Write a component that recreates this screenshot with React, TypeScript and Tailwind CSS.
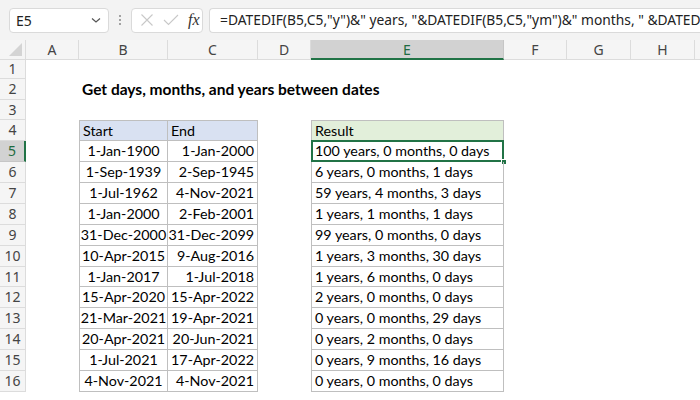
import React from 'react'

interface Row {
  start: string
  end: string
  result: string
}

const rows: Row[] = [
  { start: '1-Jan-1900', end: '1-Jan-2000', result: '100 years, 0 months, 0 days' },
  { start: '1-Sep-1939', end: '2-Sep-1945', result: '6 years, 0 months, 1 days' },
  { start: '1-Jul-1962', end: '4-Nov-2021', result: '59 years, 4 months, 3 days' },
  { start: '1-Jan-2000', end: '2-Feb-2001', result: '1 years, 1 months, 1 days' },
  { start: '31-Dec-2000', end: '31-Dec-2099', result: '99 years, 0 months, 0 days' },
  { start: '10-Apr-2015', end: '9-Aug-2016', result: '1 years, 3 months, 30 days' },
  { start: '1-Jan-2017', end: '1-Jul-2018', result: '1 years, 6 months, 0 days' },
  { start: '15-Apr-2020', end: '15-Apr-2022', result: '2 years, 0 months, 0 days' },
  { start: '21-Mar-2021', end: '19-Apr-2021', result: '0 years, 0 months, 29 days' },
  { start: '20-Apr-2021', end: '20-Jun-2021', result: '0 years, 2 months, 0 days' },
  { start: '1-Jul-2021', end: '17-Apr-2022', result: '0 years, 9 months, 16 days' },
  { start: '4-Nov-2021', end: '4-Nov-2021', result: '0 years, 0 months, 0 days' },
]

const cols = [
  { name: 'A', w: 'w-[53px]' },
  { name: 'B', w: 'w-[89px]' },
  { name: 'C', w: 'w-[90px]' },
  { name: 'D', w: 'w-[53px]' },
  { name: 'E', w: 'w-[193px]' },
  { name: 'F', w: 'w-[63px]' },
  { name: 'G', w: 'w-[64px]' },
  { name: 'H', w: 'w-[64px]' },
]

// row heights, rows 1..16
const rowH = ['h-[19px]', 'h-[21px]', 'h-[20px]', 'h-[21px]', 'h-[21px]', 'h-[21px]', 'h-[21px]', 'h-[21px]',
  'h-[21px]', 'h-[21px]', 'h-[20px]', 'h-[21px]', 'h-[21px]', 'h-[21px]', 'h-[21px]', 'h-[21px]']

function RowHead({ n, active }: { n: number; active?: boolean }) {
  return (
    <div
      className={`w-[26px] h-full shrink-0 flex items-center justify-center text-[14px] border-b border-r ${
        active
          ? 'bg-[#d2d2d2] text-[#1e6b41] border-b-[#c6c6c6] border-r-[#217346] border-r-2'
          : 'bg-[#f5f5f5] text-[#444] border-[#dcdcdc]'
      }`}
      style={{ fontFamily: '"Noto Sans", sans-serif' }}
    >
      {n}
    </div>
  )
}

export default function App() {
  return (
    <div className="w-[700px] h-[400px] overflow-hidden bg-white" style={{ fontFamily: '"Noto Sans", "Open Sans", sans-serif' }}>
      {/* Formula bar */}
      <div className="h-[40px] bg-[#f3f3f3] flex items-center">
        <div className="ml-[9px] w-[100px] h-[25px] bg-white rounded-[4px] border border-[#dadada] flex items-center justify-between pl-[6px] pr-[6px]">
          <span className="text-[14px] text-[#222]">E5</span>
          <svg width="12" height="12" viewBox="0 0 12 12">
            <path d="M2 4.5 L6 8 L10 4.5" fill="none" stroke="#555" strokeWidth="1.2" />
          </svg>
        </div>
        <div className="w-[22px] flex flex-col items-center gap-[2px]">
          <span className="w-[2px] h-[2px] bg-[#888] rounded-full" />
          <span className="w-[2px] h-[2px] bg-[#888] rounded-full" />
          <span className="w-[2px] h-[2px] bg-[#888] rounded-full" />
        </div>
        <div className="w-[72px] h-[25px] bg-white rounded-[4px] border border-[#dadada] flex items-center pl-[8px] gap-[9px]">
          <svg width="14" height="14" viewBox="0 0 14 14">
            <path d="M1.5 1.5 L12.5 12.5 M12.5 1.5 L1.5 12.5" stroke="#c8c8c8" strokeWidth="1.1" />
          </svg>
          <svg width="16" height="14" viewBox="0 0 16 14">
            <path d="M1 7 L5.5 11.5 L15 2" fill="none" stroke="#c8c8c8" strokeWidth="1.1" />
          </svg>
          <span className="text-[16px] italic text-[#333] leading-none" style={{ fontFamily: '"Liberation Serif", serif' }}>
            fx
          </span>
        </div>
        <div className="ml-[6px] flex-1 min-w-0 h-[25px] bg-white rounded-l-[4px] border border-r-0 border-[#dadada] flex items-center pl-[10px] overflow-hidden whitespace-nowrap">
          <span className="text-[13.8px] text-[#222]">
            =DATEDIF(B5,C5,"y")&amp;" years, "&amp;DATEDIF(B5,C5,"ym")&amp;" months, " &amp;DATEDIF(
          </span>
        </div>
      </div>

      {/* Column headers */}
      <div className="flex h-[20px] bg-[#f5f5f5]">
        <div className="w-[26px] shrink-0 border-r border-b border-[#dcdcdc] relative">
          <svg className="absolute right-[3px] bottom-[3px]" width="13" height="13" viewBox="0 0 13 13">
            <path d="M13 0 L13 13 L0 13 Z" fill="#d4d4d4" />
          </svg>
        </div>
        {cols.map((c) => (
          <div
            key={c.name}
            className={`${c.w} shrink-0 flex items-center justify-center text-[14px] border-r ${
              c.name === 'E'
                ? 'bg-[#d2d2d2] text-[#1e6b41] border-[#c6c6c6] border-b-2 border-b-[#217346]'
                : 'text-[#444] border-[#dcdcdc] border-b border-b-[#dcdcdc]'
            }`}
          >
            {c.name}
          </div>
        ))}
        <div className="flex-1 border-b border-[#dcdcdc]" />
      </div>

      {/* Sheet */}
      <div className="text-[14.3px] leading-none text-black whitespace-nowrap" style={{ fontFamily: 'Lato, "Open Sans", sans-serif' }}>
        <div className={`flex ${rowH[0]}`}>
          <RowHead n={1} />
        </div>
        <div className={`flex ${rowH[1]}`}>
          <RowHead n={2} />
          <div className="w-[53px] shrink-0" />
          <div className="flex items-center pl-[3px] font-bold text-[15.5px]">Get days, months, and years between dates</div>
        </div>
        <div className={`flex ${rowH[2]}`}>
          <RowHead n={3} />
        </div>
        <div className={`flex ${rowH[3]}`}>
          <RowHead n={4} />
          <div className="w-[53px] shrink-0" />
          <div className="w-[89px] shrink-0 bg-[#d9e1f2] border border-[#bfbfbf] flex items-center pl-[3px] pt-[1px]">Start</div>
          <div className="w-[90px] shrink-0 bg-[#d9e1f2] border border-l-0 border-[#bfbfbf] flex items-center pl-[3px] pt-[1px]">End</div>
          <div className="w-[53px] shrink-0" />
          <div className="w-[193px] shrink-0 bg-[#e2efda] border border-[#bfbfbf] flex items-center pl-[3px] pt-[1px]">Result</div>
        </div>
        {rows.map((r, i) => {
          const n = i + 5
          const sel = n === 5
          return (
            <div key={n} className={`flex ${rowH[n - 1]}`}>
              <RowHead n={n} active={sel} />
              <div className="w-[53px] shrink-0" />
              <div className="w-[89px] shrink-0 border-x border-b border-[#bfbfbf] flex items-center justify-center pt-[1px]">
                {r.start}
              </div>
              <div className="w-[90px] shrink-0 border-r border-b border-[#bfbfbf] flex items-center justify-end pr-[3px] pt-[1px]">
                {r.end}
              </div>
              <div className="w-[53px] shrink-0" />
              <div className="w-[193px] shrink-0 border-x border-b border-[#bfbfbf] flex items-center pl-[3px] pt-[1px] relative">
                {r.result}
                {sel && (
                  <>
                    <div className="absolute -left-[1px] -top-[1px] -right-[1px] -bottom-[1px] border-2 border-[#217346]" />
                    <div className="absolute -right-[4px] -bottom-[4px] w-[6px] h-[6px] bg-[#217346] border border-white" />
                  </>
                )}
              </div>
            </div>
          )
        })}
      </div>
    </div>
  )
}
